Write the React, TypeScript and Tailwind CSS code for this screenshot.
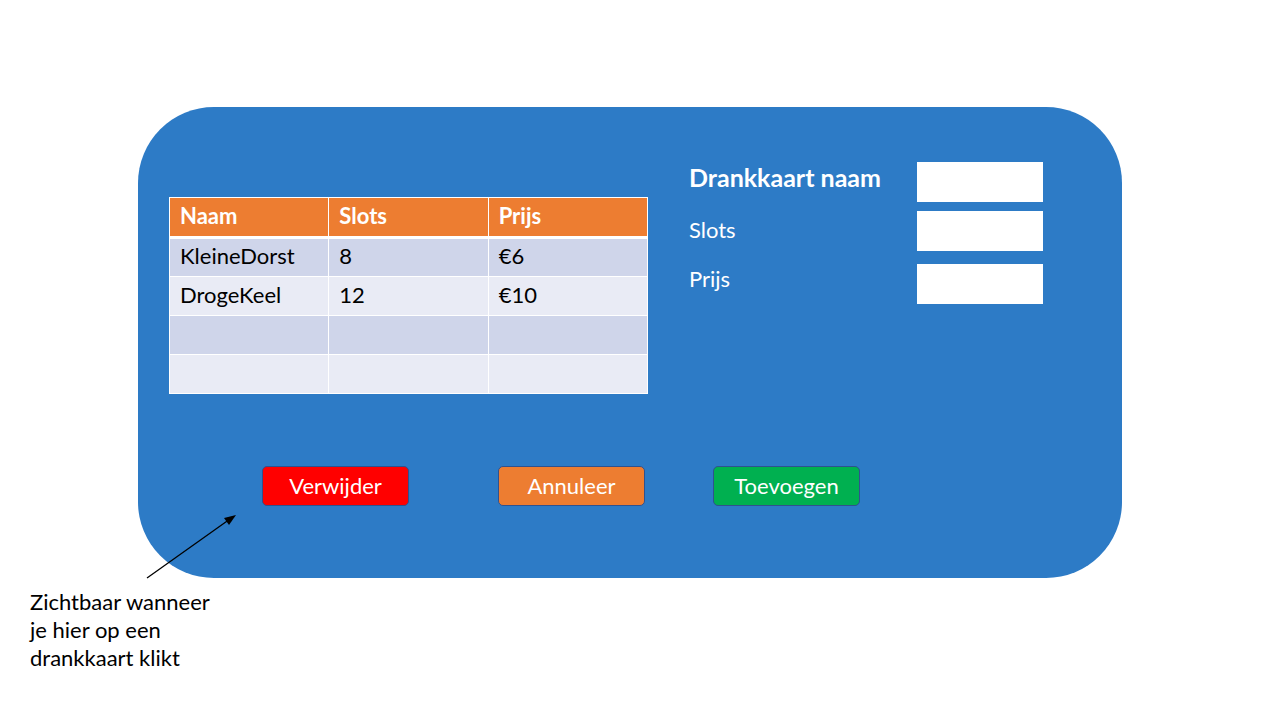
import React from 'react';

type Drankkaart = {
  naam: string;
  slots: string;
  prijs: string;
};

const rows: Drankkaart[] = [
  { naam: 'KleineDorst', slots: '8', prijs: '€6' },
  { naam: 'DrogeKeel', slots: '12', prijs: '€10' },
  { naam: '', slots: '', prijs: '' },
  { naam: '', slots: '', prijs: '' },
];

const font = { fontFamily: 'Lato, "Open Sans", "Liberation Sans", sans-serif' };

function Arrow() {
  // annotation arrow pointing from the note to the delete button
  return (
    <svg className="absolute left-[140px] top-[505px]" width="105" height="80" viewBox="0 0 105 80">
      <line x1="7" y1="73" x2="90" y2="14" stroke="#000" strokeWidth="1.3" />
      <polygon points="96,10 84,13 89,20" fill="#000" />
    </svg>
  );
}

function FormRow({ label, bold, className, labelClass }: { label: string; bold?: boolean; className?: string; labelClass?: string }) {
  return (
    <div className={`flex items-center ${className ?? ''}`}>
      <span className={`w-[228px] text-white ${bold ? 'text-[25px] font-bold' : 'text-[22px]'} ${labelClass ?? ''}`}>
        {label}
      </span>
      <div className="h-[40px] w-[126px] bg-white" />
    </div>
  );
}

function ActionButton({ label, color }: { label: string; color: string }) {
  return (
    <button
      type="button"
      className={`flex h-[40px] w-[147px] items-center justify-center rounded-[5px] border border-[#2f528f] pb-[2px] text-[22px] text-white ${color}`}
    >
      {label}
    </button>
  );
}

export default function App() {
  return (
    <div className="relative h-[720px] w-[1280px] overflow-hidden bg-white" style={font}>
      <div className="ml-[138px] mt-[107px] flex h-[471px] w-[984px] flex-col rounded-[76px] bg-[#2d7bc6]">
        <div className="flex items-start">
          <table className="ml-[31px] mt-[90px] w-[479px] table-fixed border-collapse text-[22px] leading-[26px]">
            <thead>
              <tr className="h-[40px] bg-[#ed7d31] text-white">
                <th className="border-x border-t border-b-[3px] border-white px-[10px] pb-[2px] text-left font-bold">Naam</th>
                <th className="border-x border-t border-b-[3px] border-white px-[10px] pb-[2px] text-left font-bold">Slots</th>
                <th className="border-x border-t border-b-[3px] border-white px-[10px] pb-[2px] text-left font-bold">Prijs</th>
              </tr>
            </thead>
            <tbody className="text-black">
              {rows.map((r, i) => (
                <tr key={i} className={`h-[39px] ${i % 2 === 0 ? 'bg-[#cfd5ea]' : 'bg-[#e9ebf5]'}`}>
                  <td className="border border-white px-[10px] pb-[3px]">{r.naam}</td>
                  <td className="border border-white px-[10px] pb-[3px]">{r.slots}</td>
                  <td className="border border-white px-[10px] pb-[3px]">{r.prijs}</td>
                </tr>
              ))}
            </tbody>
          </table>

          <div className="ml-[41px] mt-[55px] flex flex-col">
            <FormRow label="Drankkaart naam" bold labelClass="-mt-[8px]" />
            <FormRow label="Slots" className="mt-[9px]" labelClass="-mt-[3px]" />
            <FormRow label="Prijs" className="mt-[13px]" labelClass="-mt-[12px]" />
          </div>
        </div>

        <div className="ml-[124px] mt-[72px] flex">
          <ActionButton label="Verwijder" color="bg-[#ff0000]" />
          <div className="ml-[89px]">
            <ActionButton label="Annuleer" color="bg-[#ed7d31]" />
          </div>
          <div className="ml-[68px]">
            <ActionButton label="Toevoegen" color="bg-[#00b050]" />
          </div>
        </div>
      </div>

      <p className="ml-[30px] mt-[10px] text-[22px] leading-[28px] text-black">
        Zichtbaar wanneer
        <br />
        je hier op een
        <br />
        drankkaart klikt
      </p>

      <Arrow />
    </div>
  );
}
